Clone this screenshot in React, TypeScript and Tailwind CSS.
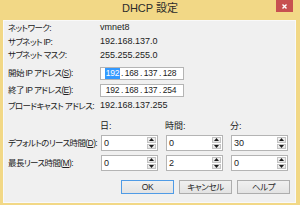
import React from 'react';

const font = "font-['Liberation_Sans','Noto_Sans_CJK_JP',sans-serif] [font-feature-settings:'palt']";

function Acc({ children }: { children: React.ReactNode }) {
  return <span className="underline underline-offset-[1px]">{children}</span>;
}

function Row({
  label,
  h,
  mt,
  children,
}: {
  label: React.ReactNode;
  h: string;
  mt?: string;
  children?: React.ReactNode;
}) {
  return (
    <div className={`flex items-center ${h} ${mt ?? ''}`}>
      <div className="w-[92px] shrink-0 whitespace-nowrap text-[8.5px] tracking-[-0.6px]">{label}</div>
      {children}
    </div>
  );
}

function IpField({ parts, selected }: { parts: string[]; selected?: boolean }) {
  return (
    <div className="w-[84px] h-[13px] bg-white border border-[#b4b4b4] flex items-center pl-[5px] text-[#222] text-[8.5px] tracking-[-0.2px]">
      {parts.map((p, i) => (
        <React.Fragment key={i}>
          {i > 0 && <span className="w-[6px] text-center">.</span>}
          <span className="w-[13px] flex justify-center">
            <span
              className={
                i === 0 && selected
                  ? 'bg-[#3399ff] text-white px-[1px] leading-[11px]'
                  : ''
              }
            >
              {p}
            </span>
          </span>
        </React.Fragment>
      ))}
    </div>
  );
}

function Arrow({ up }: { up?: boolean }) {
  return (
    <svg width="5" height="3" viewBox="0 0 5 3">
      <polygon points={up ? '0,3 5,3 2.5,0' : '0,0 5,0 2.5,3'} fill="#1a1a1a" />
    </svg>
  );
}

function Spin({ value }: { value: string }) {
  return (
    <div className="w-[57px] h-[16px] bg-white border border-[#b4b4b4] flex">
      <div className="flex-1 pl-[2px] leading-[14px] text-[#222]">{value}</div>
      <div className="w-[9px] flex flex-col my-[1px] mr-[1px] gap-[1px]">
        <div className="flex-1 flex items-center justify-center bg-gradient-to-b from-[#f4f4f4] to-[#e2e2e2] border border-[#c4c4c4]">
          <Arrow up />
        </div>
        <div className="flex-1 flex items-center justify-center bg-gradient-to-b from-[#f4f4f4] to-[#e2e2e2] border border-[#c4c4c4]">
          <Arrow />
        </div>
      </div>
    </div>
  );
}

function Btn({ children, primary }: { children: React.ReactNode; primary?: boolean }) {
  return (
    <div
      className={`w-[53px] h-[14px] flex items-center justify-center bg-gradient-to-b from-[#f0f0f0] to-[#e3e3e3] border ${
        primary ? 'border-[#4f9be6]' : 'border-[#adadad]'
      } text-[#1e1e1e] text-[8.5px] tracking-[-0.4px]`}
    >
      {children}
    </div>
  );
}

export default function App() {
  return (
    <div className={`w-[300px] h-[205px] bg-[#f2d886] flex flex-col ${font}`}>
      <div className="h-[20px] relative flex items-center justify-center">
        <span className="text-[11px] text-[#2b2b2b] leading-none mb-[3px]">DHCP 設定</span>
        <div className="absolute right-[7px] top-0 w-[17px] h-[12px] bg-[#c75050] flex items-center justify-center">
          <svg width="5" height="5" viewBox="0 0 5 5">
            <path d="M0.5 0.5L4.5 4.5M4.5 0.5L0.5 4.5" stroke="#fff" strokeWidth="1.4" />
          </svg>
        </div>
      </div>
      <div className="ml-[3px] mr-[4px] mb-[2px] flex-1 bg-[#f0f0f0] border border-[#f9f9f9] pl-[4px] pr-[5px] text-[9px] text-[#222] flex flex-col">
        <Row label="ネットワーク:" h="h-[14px]">
          <span>vmnet8</span>
        </Row>
        <Row label="サブネット IP:" h="h-[14px]">
          <span>192.168.137.0</span>
        </Row>
        <Row label="サブネット マスク:" h="h-[13px]">
          <span>255.255.255.0</span>
        </Row>
        <Row
          label={
            <>
              開始 IP アドレス(<Acc>S</Acc>):
            </>
          }
          h="h-[13px]"
          mt="mt-[5px]"
        >
          <IpField parts={['192', '168', '137', '128']} selected />
        </Row>
        <Row
          label={
            <>
              終了 IP アドレス(<Acc>E</Acc>):
            </>
          }
          h="h-[13px]"
          mt="mt-[4px]"
        >
          <IpField parts={['192', '168', '137', '254']} />
        </Row>
        <Row label="ブロードキャスト アドレス:" h="h-[14px]" mt="mt-[2px]">
          <span>192.168.137.255</span>
        </Row>
        <Row label="" h="h-[13px]" mt="mt-[7px]">
          <div className="flex gap-[8px]">
            <span className="w-[57px]">日:</span>
            <span className="w-[57px]">時間:</span>
            <span className="w-[57px]">分:</span>
          </div>
        </Row>
        <Row
          label={
            <>
              デフォルトのリース時間(<Acc>D</Acc>):
            </>
          }
          h="h-[16px]"
          mt="mt-[2px]"
        >
          <div className="flex gap-[8px] ml-[1px]">
            <Spin value="0" />
            <Spin value="0" />
            <Spin value="30" />
          </div>
        </Row>
        <Row
          label={
            <>
              最長リース時間(<Acc>M</Acc>):
            </>
          }
          h="h-[16px]"
          mt="mt-[4px]"
        >
          <div className="flex gap-[8px] ml-[1px]">
            <Spin value="0" />
            <Spin value="2" />
            <Spin value="0" />
          </div>
        </Row>
        <div className="flex justify-end gap-[5px] mt-[9px]">
          <Btn primary>OK</Btn>
          <Btn>キャンセル</Btn>
          <Btn>ヘルプ</Btn>
        </div>
      </div>
    </div>
  );
}
